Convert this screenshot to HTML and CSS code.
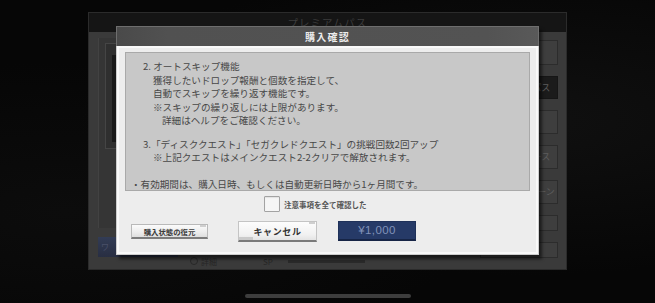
FILE: index.html
```html
<!DOCTYPE html>
<html lang="ja">
<head>
<meta charset="utf-8">
<title>購入確認</title>
<link rel="stylesheet" href="styles.css">
</head>
<body>
<div class="screen">
  <div class="backwin">
    <div class="backtitle">プレミアムパス</div>
    <div class="backbody">
      <div class="leftcol">
        <div class="lbox"><div class="lbox-in"><div class="lbox-dark"></div></div></div>
        <div class="thumb">ワ</div>
      </div>
      <div class="midcol">
        <div class="midfoot">
          <span class="fgroup"><span class="ficon"></span><span class="ftext">詳細</span></span>
          <span class="fsp">SP</span>
          <span class="fbar"></span>
        </div>
      </div>
      <div class="rightcol">
        <div class="rbtn"></div>
        <div class="rbtn dark">プレミアムパス</div>
        <div class="rbtn"></div>
        <div class="rbtn">プレミアコース</div>
        <div class="rbtn">新規キャンペーン</div>
        <div class="rbtn short"></div>
        <div class="rbtn short"></div>
      </div>
    </div>
  </div>
  <div class="homebar"></div>

  <div class="modal">
    <div class="mtitle">購入確認</div>
    <div class="mbody">
      <div class="notes">
        <p class="i1">2. オートスキップ機能</p>
        <p class="i2">獲得したいドロップ報酬と個数を指定して、</p>
        <p class="i2">自動でスキップを繰り返す機能です。</p>
        <p class="i2">※スキップの繰り返しには上限があります。</p>
        <p class="i3">詳細はヘルプをご確認ください。</p>
        <p class="i1 gap1">3.「ディスククエスト」「セガクレドクエスト」の挑戦回数2回アップ</p>
        <p class="i2">※上記クエストはメインクエスト2-2クリアで解放されます。</p>
        <p class="i0 gap2">・有効期間は、購入日時、もしくは自動更新日時から1ヶ月間です。</p>
      </div>
      <div class="confirm">
        <span class="cbox"></span>
        <span class="clabel">注意事項を全て確認した</span>
      </div>
      <div class="actions">
        <button class="btn btn-restore">購入状態の復元</button>
        <button class="btn btn-cancel">キャンセル</button>
        <button class="btn btn-buy">¥1,000</button>
      </div>
    </div>
  </div>
</div>
</body>
</html>
```

FILE: styles.css
```css
html, body {
  margin: 0;
  padding: 0;
}
body {
  width: 655px;
  height: 303px;
  overflow: hidden;
  background: #070707;
  font-family: "Noto Sans CJK JP", "Noto Sans", sans-serif;
}
.screen {
  position: relative;
  width: 655px;
  height: 303px;
  padding-top: 12px;
  box-sizing: border-box;
  background:
    radial-gradient(ellipse at 80% 40%, #101010 0%, rgba(16,16,16,0) 60%),
    radial-gradient(ellipse at 10% 70%, #0c0c0c 0%, rgba(12,12,12,0) 50%),
    #060606;
}

/* background window */
.backwin {
  margin-left: 88px;
  width: 479px;
  height: 258px;
  background: #3a3a3a;
  border: 1px solid #2b2b2b;
  box-sizing: border-box;
  display: flex;
  flex-direction: column;
}
.backtitle {
  height: 19px;
  background: #151515;
  color: #3c3c3c;
  font-size: 10.5px;
  line-height: 19px;
  text-align: center;
  letter-spacing: 1px;
}
.backbody {
  flex: 1;
  display: flex;
  gap: 6px;
  padding: 6px 8px 3px 9px;
}
.leftcol {
  width: 80px;
  display: flex;
  flex-direction: column;
  gap: 9px;
}
.lbox {
  height: 190px;
  background: #353535;
  border-left: 1px solid #424242;
  box-sizing: border-box;
  padding: 5px 0 0 6px;
}
.lbox-in {
  height: 106px;
  background: #2f2f2f;
  border: 1px solid #454545;
  box-sizing: border-box;
  padding: 11px 0 0 6px;
}
.lbox-dark {
  height: 87px;
  background: #191919;
}
.thumb {
  height: 20px;
  background: linear-gradient(#323c55, #282e42);
  color: #4a5068;
  font-size: 8px;
  line-height: 20px;
  padding-left: 3px;
}
.midcol {
  flex: 1;
  display: flex;
  flex-direction: column;
  justify-content: flex-end;
}
.midfoot {
  height: 10px;
  display: flex;
  align-items: center;
  padding-left: 6px;
  font-size: 8px;
  color: #262626;
}
.fgroup {
  width: 73px;
  display: flex;
  align-items: center;
  gap: 3px;
}
.ficon {
  width: 6px;
  height: 6px;
  border: 1px solid #282828;
  border-radius: 50%;
}
.fsp {
  width: 25px;
}
.fbar {
  width: 77px;
  height: 3px;
  background: #2a2a2a;
}
.rightcol {
  width: 78px;
  display: flex;
  flex-direction: column;
  gap: 11px;
  padding-top: 2px;
}
.rbtn {
  height: 24px;
  background: #3e3e3e;
  border: 1px solid #2c2c2c;
  box-sizing: border-box;
  color: #5e5e5e;
  font-size: 9px;
  line-height: 22px;
  text-align: center;
  white-space: nowrap;
  overflow: hidden;
}
.rbtn:first-child {
  height: 25px;
}
.rbtn.dark {
  height: 23px;
  background: #1b1b1b;
  border-color: #161616;
  line-height: 21px;
}
.rbtn.short {
  height: 16px;
}
.homebar {
  width: 166px;
  height: 4px;
  margin: 24px auto 0;
  border-radius: 2px;
  background: #3d3d3d;
}

/* modal */
.modal {
  position: absolute;
  left: 116px;
  top: 26px;
  width: 423px;
  height: 229px;
  display: flex;
  flex-direction: column;
  box-shadow: 3px 4px 3px rgba(0, 0, 0, 0.55);
}
.mtitle {
  height: 20px;
  box-sizing: border-box;
  background: linear-gradient(90deg, #4a4a4a 0%, #515151 12%, #535353 88%, #595959 100%);
  border: 1px solid #6e6e6e;
  border-bottom: none;
  color: #ececec;
  font-size: 10px;
  font-weight: bold;
  letter-spacing: 1.3px;
  line-height: 19px;
  text-align: center;
}
.mbody {
  flex: 1;
  background: #ededed;
  border: 1px solid #cdcdcd;
  border-top: none;
  box-shadow: inset 0 0 0 2px #f9f9f9;
  padding: 6px 8px 0 8px;
}
.notes {
  height: 139px;
  box-sizing: border-box;
  border: 1px solid #a9a9a9;
  background: #c8c8c8;
  padding-top: 7px;
  overflow: hidden;
  font-size: 9.6px;
  line-height: 13.5px;
  color: #474747;
  white-space: nowrap;
}
.notes p {
  margin: 0;
}
.i0 { padding-left: 5px; }
.i1 { padding-left: 17px; }
.i2 { padding-left: 27px; }
.i3 { padding-left: 36px; }
.notes .gap1 { margin-top: 10px; }
.notes .gap2 { margin-top: 13px; }

.confirm {
  display: flex;
  align-items: center;
  height: 16px;
  margin: 5px 0 0 139px;
}
.cbox {
  width: 16px;
  height: 16px;
  box-sizing: border-box;
  border: 1px solid #a3a3a3;
  border-radius: 1px;
  background: #f6f6f6;
  box-shadow: inset 0 1px 1px rgba(0, 0, 0, 0.08);
}
.clabel {
  margin-left: 4px;
  font-size: 7.5px;
  font-weight: bold;
  color: #545454;
}

.actions {
  display: flex;
  align-items: flex-start;
  margin-top: 9px;
  padding-left: 6px;
}
.btn {
  position: relative;
  padding: 0;
  margin: 0;
  box-sizing: border-box;
  font-family: "Noto Sans CJK JP", "Noto Sans", sans-serif;
  font-weight: bold;
  cursor: pointer;
}
.btn-restore {
  width: 77px;
  height: 15px;
  margin-top: 3px;
  background: linear-gradient(#fbfbfb, #ececec 60%, #dedede);
  border: 1px solid #b9b9b9;
  border-bottom: 2px solid #7c7c7c;
  color: #3c3c3c;
  font-size: 7.4px;
  line-height: 11px;
}
.btn-restore::after,
.btn-cancel::after {
  content: "";
  position: absolute;
  right: 1px;
  top: 0;
  width: 6px;
  height: 2px;
  background: #cfcfcf;
}
.btn-cancel {
  width: 79px;
  height: 21px;
  margin-left: 30px;
  background: linear-gradient(#fdfdfd, #f1f1f1 70%, #e4e4e4);
  border: 1px solid #c4c4c4;
  border-bottom: 2px solid #7a7a7a;
  color: #333;
  font-size: 9px;
  letter-spacing: 0.6px;
  line-height: 17px;
}
.btn-cancel::before {
  content: "";
  position: absolute;
  left: 0;
  bottom: 0;
  width: 14px;
  height: 3px;
  background: #cacaca;
}
.btn-buy {
  width: 78px;
  height: 20px;
  margin-left: 21px;
  background: #263a67;
  border: 1px solid #1f3159;
  border-bottom: 2px solid #172546;
  color: #8192b9;
  font-family: "Liberation Sans", Arial, sans-serif;
  font-weight: normal;
  font-size: 11.5px;
  letter-spacing: 0.4px;
  line-height: 17px;
}
```
